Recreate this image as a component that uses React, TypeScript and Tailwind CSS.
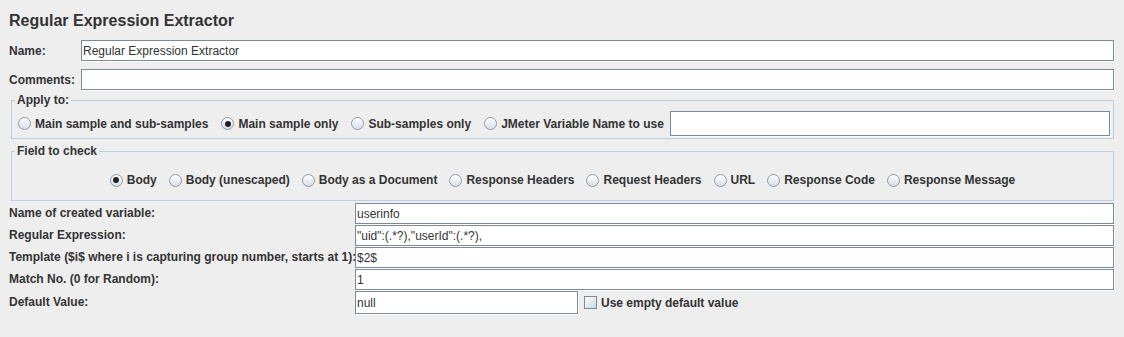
import React from "react";

type RadioProps = {
  label: string;
  checked?: boolean;
};

function Radio({ label, checked }: RadioProps) {
  return (
    <label className="flex items-center gap-[4px] whitespace-nowrap">
      <span className="flex h-[13px] w-[13px] items-center justify-center rounded-full border border-[#8e9aa6] bg-gradient-to-b from-[#ffffff] to-[#d6dee8]">
        {checked ? <span className="h-[6px] w-[6px] rounded-full bg-[#222222]" /> : null}
      </span>
      <span className="font-bold">{label}</span>
    </label>
  );
}

function Field({ value, className = "" }: { value?: string; className?: string }) {
  return (
    <div
      className={`flex items-center border border-[#7a8a99] bg-white pl-[1px] shadow-[1px_1px_0_#ffffff] ${className}`}
    >
      <span className="font-normal">{value}</span>
    </div>
  );
}

const rows = [
  { label: "Name of created variable:", value: "userinfo" },
  { label: "Regular Expression:", value: "\"uid\":(.*?),\"userId\":(.*?)," },
  { label: "Template ($i$ where i is capturing group number, starts at 1):", value: "$2$" },
  { label: "Match No. (0 for Random):", value: "1" },
];

export default function App() {
  return (
    <div className="h-[337px] w-[1124px] bg-[#eeeeee] font-['Liberation_Sans',Arial,sans-serif] text-[12px] leading-[14px] text-[#333333]">
      <h1 className="h-[40px] pl-[9px] pt-[12px] text-[16px] font-bold leading-[18px]">
        Regular Expression Extractor
      </h1>

      <div className="flex h-[21px] items-center pr-[10px]">
        <span className="w-[81px] pl-[9px] font-bold">Name:</span>
        <Field value="Regular Expression Extractor" className="h-[21px] flex-1" />
      </div>

      <div className="mt-[8px] flex h-[21px] items-center pr-[10px]">
        <span className="w-[81px] pl-[9px] font-bold">Comments:</span>
        <Field className="h-[21px] flex-1" />
      </div>

      <fieldset className="mt-[3px] ml-[11px] mr-[10px] border border-[#b8cfe5] pb-[2px] pl-[6px] pr-[3px]">
        <legend className="-ml-[3px] px-[2px] font-bold">Apply to:</legend>
        <div className="mt-[4px] flex h-[25px] items-center">
          <div className="flex items-center gap-[13px]">
            <Radio label="Main sample and sub-samples" />
            <Radio label="Main sample only" checked />
            <Radio label="Sub-samples only" />
            <Radio label="JMeter Variable Name to use" />
          </div>
          <Field className="ml-[6px] h-[25px] flex-1" />
        </div>
      </fieldset>

      <fieldset className="mt-[5px] ml-[11px] mr-[10px] border border-[#b8cfe5] pb-[10px]">
        <legend className="ml-[3px] px-[2px] font-bold">Field to check</legend>
        <div className="mt-[12px] flex h-[20px] items-center justify-center gap-[12px]">
          <Radio label="Body" checked />
          <Radio label="Body (unescaped)" />
          <Radio label="Body as a Document" />
          <Radio label="Response Headers" />
          <Radio label="Request Headers" />
          <Radio label="URL" />
          <Radio label="Response Code" />
          <Radio label="Response Message" />
        </div>
      </fieldset>

      <div className="mt-[2px] flex flex-col gap-[1px] pr-[10px]">
        {rows.map((r) => (
          <div key={r.label} className="flex h-[21px]">
            <span className="flex w-[355px] items-center whitespace-nowrap pb-[2px] pl-[9px] font-bold">
              {r.label}
            </span>
            <Field value={r.value} className="h-[21px] flex-1" />
          </div>
        ))}
        <div className="flex h-[23px]">
          <span className="flex w-[355px] items-center pb-[2px] pl-[9px] font-bold">Default Value:</span>
          <Field value="null" className="h-[23px] w-[223px]" />
          <label className="ml-[6px] flex items-center gap-[4px]">
            <span className="h-[13px] w-[13px] border border-[#7a8a99] bg-gradient-to-br from-[#ffffff] to-[#c9d6e3]" />
            <span className="font-bold">Use empty default value</span>
          </label>
        </div>
      </div>
    </div>
  );
}
